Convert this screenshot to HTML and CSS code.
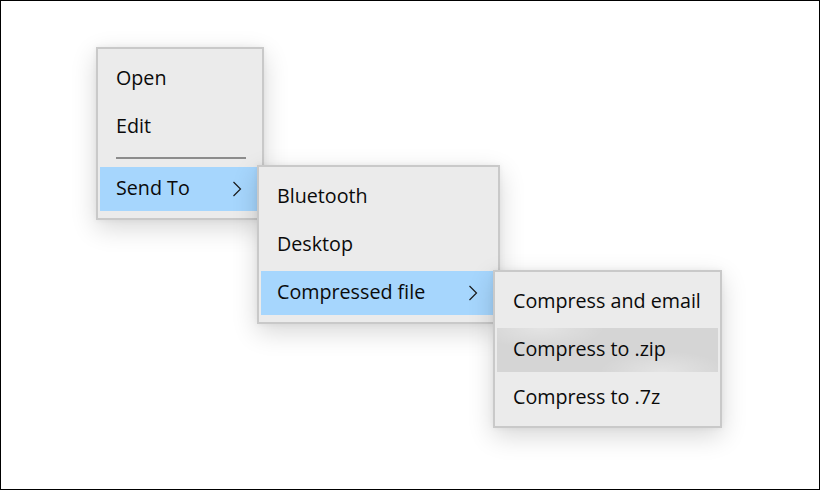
FILE: index.html
```html
<!DOCTYPE html>
<html>
<head>
<meta charset="utf-8">
<link rel="stylesheet" href="styles.css">
</head>
<body>
<div class="frame">
  <div class="menu menu-main">
    <div class="item">Open</div>
    <div class="item">Edit</div>
    <div class="sep"></div>
    <div class="item active">Send To
      <svg class="chev" width="10" height="16" viewBox="0 0 10 16"><path d="M1.5 1 L8.5 8 L1.5 15" fill="none" stroke="#1a1a1a" stroke-width="1.2"/></svg>
    </div>
  </div>
  <div class="menu menu-send">
    <div class="item">Bluetooth</div>
    <div class="item">Desktop</div>
    <div class="item active">Compressed file
      <svg class="chev" width="10" height="16" viewBox="0 0 10 16"><path d="M1.5 1 L8.5 8 L1.5 15" fill="none" stroke="#1a1a1a" stroke-width="1.2"/></svg>
    </div>
  </div>
  <div class="menu menu-zip">
    <div class="item">Compress and email</div>
    <div class="item hover">Compress to .zip</div>
    <div class="item">Compress to .7z</div>
  </div>
</div>
</body>
</html>
```
FILE: styles.css
```css
html, body {
  margin: 0;
  padding: 0;
  background: #ffffff;
}
.frame {
  position: relative;
  width: 820px;
  height: 490px;
  box-sizing: border-box;
  border: 1px solid #000;
  background: #fff;
  overflow: hidden;
  font-family: "Open Sans", "Noto Sans", sans-serif;
  font-size: 19.7px;
  color: #0a0a0a;
}
.menu {
  position: absolute;
  box-sizing: border-box;
  background: #ebebeb;
  border: 2px solid #c9c9c9;
  padding: 8px 2px 6px;
  display: flex;
  flex-direction: column;
  gap: 4px;
  box-shadow: 0 8px 24px rgba(0,0,0,0.16), 0 0 6px rgba(0,0,0,0.06);
}
.menu-main { left: 95px; top: 46px; width: 168px; height: 173px; }
.menu-send { left: 256px; top: 164px; width: 243px; height: 159px; }
.menu-zip  { left: 492px; top: 269px; width: 229px; height: 158px; }
.item {
  height: 44px;
  box-sizing: border-box;
  flex: none;
  display: flex;
  align-items: center;
  justify-content: space-between;
  padding: 0 18px 2px 16px;
  line-height: 1;
  white-space: nowrap;
}
.item .chev { margin-top: 2px; }
.item.active { background: #a6d6fd; }
.item.hover {
  background:
    radial-gradient(ellipse 90px 30px at 20% 0%, rgba(255,255,255,0.35), rgba(255,255,255,0) 70%),
    radial-gradient(ellipse 90px 30px at 75% 100%, rgba(255,255,255,0.35), rgba(255,255,255,0) 70%),
    #d5d5d5;
}
.sep {
  height: 2px;
  flex: none;
  background: #8c8c8c;
  margin: 4px 14px 4px 16px;
}
.chev { display: block; }
```
